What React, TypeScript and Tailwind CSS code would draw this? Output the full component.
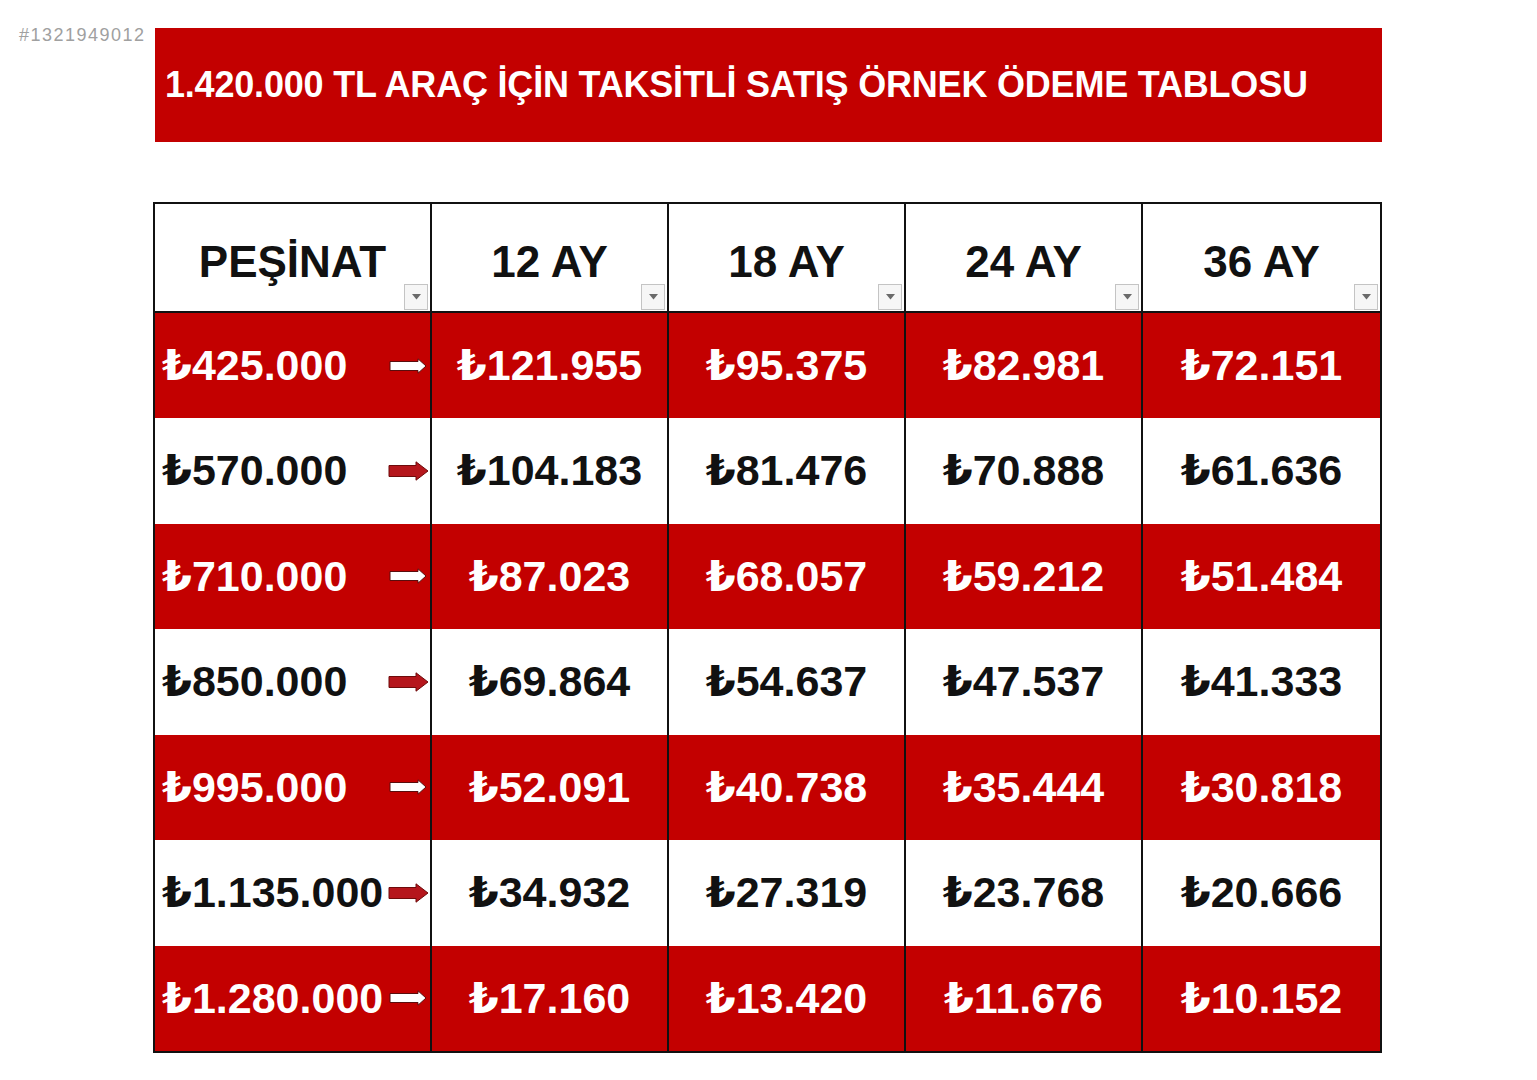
import React from "react";

const headers = ["PEŞİNAT", "12 AY", "18 AY", "24 AY", "36 AY"];

const rows: { down: string; values: string[] }[] = [
  { down: "₺425.000", values: ["₺121.955", "₺95.375", "₺82.981", "₺72.151"] },
  { down: "₺570.000", values: ["₺104.183", "₺81.476", "₺70.888", "₺61.636"] },
  { down: "₺710.000", values: ["₺87.023", "₺68.057", "₺59.212", "₺51.484"] },
  { down: "₺850.000", values: ["₺69.864", "₺54.637", "₺47.537", "₺41.333"] },
  { down: "₺995.000", values: ["₺52.091", "₺40.738", "₺35.444", "₺30.818"] },
  { down: "₺1.135.000", values: ["₺34.932", "₺27.319", "₺23.768", "₺20.666"] },
  { down: "₺1.280.000", values: ["₺17.160", "₺13.420", "₺11.676", "₺10.152"] },
];

function Arrow({ red }: { red: boolean }) {
  // kalın blok ok: kırmızı satırda beyaz, beyaz satırda koyu kırmızı
  if (red) {
    return (
      <svg width="38" height="16" viewBox="0 0 38 16" className="shrink-0 mr-[3px]">
        <polygon
          points="1,3.5 29,3.5 29,0.8 37,8 29,15.2 29,12.5 1,12.5"
          fill="#ffffff"
          stroke="#5a0d0d"
          strokeWidth="1"
          strokeLinejoin="round"
        />
      </svg>
    );
  }
  return (
    <svg width="41" height="20" viewBox="0 0 41 20" className="shrink-0 mr-[1px]">
      <polygon
        points="1,4.5 28,4.5 28,0.8 40,10 28,19.2 28,15.5 1,15.5"
        fill="#b5161c"
        stroke="#6e0b0b"
        strokeWidth="1"
        strokeLinejoin="round"
      />
    </svg>
  );
}

function FilterButton() {
  return (
    <div className="absolute right-[2px] bottom-[1px] w-[24px] h-[26px] border border-[#c4c4c4] bg-[#f6f6f6] flex items-center justify-center">
      <svg width="9" height="6" viewBox="0 0 9 6">
        <polygon points="0,0 9,0 4.5,5.5" fill="#6a6a6a" />
      </svg>
    </div>
  );
}

const cols = "grid grid-cols-[277px_237px_237px_237px_237px]";

export default function App() {
  return (
    <div
      className="relative w-[1537px] h-[1080px] bg-white"
      style={{ fontFamily: '"Liberation Sans", "DejaVu Sans", Arial, sans-serif' }}
    >
      <div className="absolute left-[19px] top-[22px] text-[18px] text-[#a0a0a0] tracking-[1.5px]">
        #1321949012
      </div>

      <div className="pl-[155px] pt-[28px]">
        <div className="w-[1227px] h-[114px] bg-[#c30000] flex items-center pl-[10px]">
          <h1 className="text-white font-bold text-[36px] tracking-[-0.2px] leading-none">
            1.420.000 TL ARAÇ İÇİN TAKSİTLİ SATIŞ ÖRNEK ÖDEME TABLOSU
          </h1>
        </div>

        <div className="mt-[60px] -ml-[2px] w-[1229px] border-2 border-[#111]">
          <div className={`${cols} h-[109px] bg-white border-b-2 border-[#111]`}>
            {headers.map((h, i) => (
              <div
                key={h}
                className={`relative flex items-center justify-center pt-[8px] ${
                  i < 4 ? "border-r-2 border-[#111]" : ""
                }`}
              >
                <span className="text-[44px] font-bold text-[#111] leading-none">{h}</span>
                <FilterButton />
              </div>
            ))}
          </div>

          {rows.map((r, ri) => {
            const red = ri % 2 === 0;
            return (
              <div
                key={r.down}
                className={`${cols} ${ri === 0 ? "h-[105px]" : "h-[105.5px]"} ${
                  red ? "bg-[#c30000] text-white" : "bg-white text-[#111]"
                }`}
              >
                <div className="flex items-center justify-between pl-[7px] border-r-2 border-[#111]">
                  <span className="text-[43px] font-bold leading-none whitespace-nowrap">{r.down}</span>
                  <Arrow red={red} />
                </div>
                {r.values.map((v, vi) => (
                  <div
                    key={vi}
                    className={`flex items-center justify-center ${
                      vi < 3 ? "border-r-2 border-[#111]" : ""
                    }`}
                  >
                    <span className="text-[43px] font-bold leading-none">{v}</span>
                  </div>
                ))}
              </div>
            );
          })}
        </div>
      </div>
    </div>
  );
}
